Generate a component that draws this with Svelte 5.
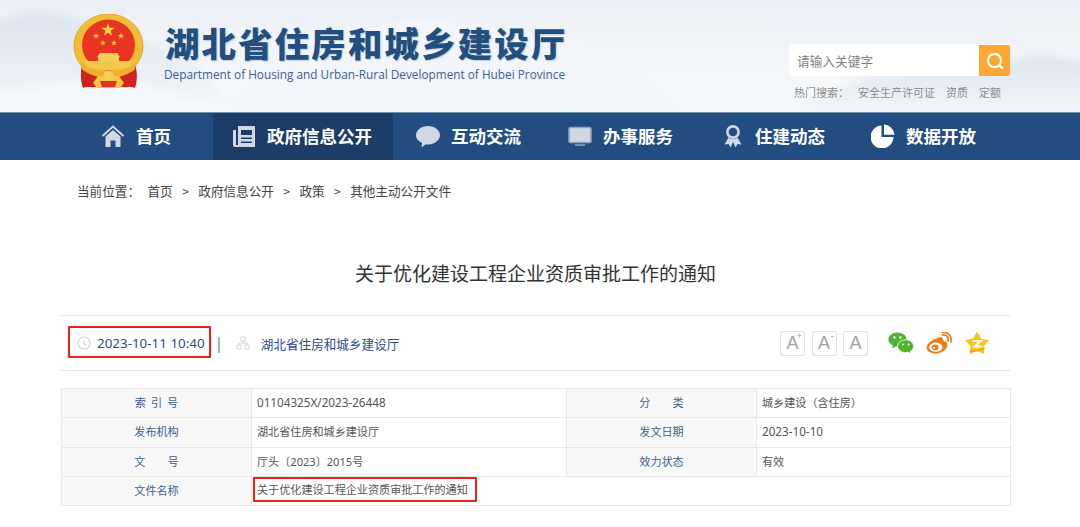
<script>
  const nav = [
    { key: 'home', label: '首页' },
    { key: 'gov', label: '政府信息公开', active: true },
    { key: 'talk', label: '互动交流' },
    { key: 'serve', label: '办事服务' },
    { key: 'news', label: '住建动态' },
    { key: 'data', label: '数据开放' }
  ];
  const crumbs = ['首页', '政府信息公开', '政策', '其他主动公开文件'];
  const rows = [
    ['索 引 号', '01104325X/2023-26448', '分　　类', '城乡建设（含住房）'],
    ['发布机构', '湖北省住房和城乡建设厅', '发文日期', '2023-10-10'],
    ['文　　号', '厅头〔2023〕2015号', '效力状态', '有效']
  ];
  const isLatin = (s) => /^[\x00-\x7f]+$/.test(s);
  const star = (cx, cy, r, k = 0.4) => {
    const p = [];
    for (let i = 0; i < 10; i++) {
      const a = -Math.PI / 2 + (i * Math.PI) / 5;
      const q = i % 2 ? r * k : r;
      p.push((cx + q * Math.cos(a)).toFixed(2) + ',' + (cy + q * Math.sin(a)).toFixed(2));
    }
    return p.join(' ');
  };
</script>

<div class="page">
  <header class="top">
    <svg class="scenery" viewBox="0 0 1080 112" preserveAspectRatio="none" aria-hidden="true">
      <defs>
        <linearGradient id="sky" x1="0" y1="0" x2="0" y2="1">
          <stop offset="0" stop-color="#ebf0f6" />
          <stop offset="1" stop-color="#f8fafc" />
        </linearGradient>
        <linearGradient id="hill" x1="0" y1="0" x2="0" y2="1">
          <stop offset="0" stop-color="#dbe5ee" />
          <stop offset="1" stop-color="#f5f8fb" />
        </linearGradient>
        <filter id="soft"><feGaussianBlur stdDeviation="4" /></filter>
      </defs>
      <rect width="1080" height="112" fill="url(#sky)" />
      <g filter="url(#soft)">
        <path d="M-10 24 L30 12 L58 14 L120 32 L190 62 L250 120 L-10 120Z" fill="url(#hill)" />
        <path d="M200 120 L300 40 L420 20 L560 36 L640 70 L700 120Z" fill="#f2f6fa" />
        <path d="M760 120 L880 72 L990 68 L1040 54 L1090 64 L1090 120Z" fill="url(#hill)" />
        <path d="M-10 92 L120 78 L260 120 L-10 120Z" fill="#f6f9fb" />
      </g>
    </svg>
    <div class="emblem">
      <svg width="72" height="76" viewBox="0 0 72 76" aria-hidden="true">
        <path d="M9 50 C7 60 8 68 10 74 C14 72 18 74 22 73 L50 73 C54 74 58 72 62 74 C64 68 65 60 62 50Z" fill="#cf231d" />
        <ellipse cx="35.5" cy="32" rx="34.5" ry="32" fill="#f2bd36" stroke="#e6a82a" />
        <ellipse cx="35.5" cy="31" rx="26.5" ry="25.5" fill="#ea3423" />
        <polygon points={star(35, 16, 7)} fill="#f7d23f" />
        <polygon points={star(23, 22, 3.4)} fill="#f7d23f" />
        <polygon points={star(48, 22, 3.4)} fill="#f7d23f" />
        <polygon points={star(30, 29, 3)} fill="#f7d23f" />
        <polygon points={star(41, 29, 3)} fill="#f7d23f" />
        <path d="M27 39 H44 L47 43 H24Z M25 43 H46 V47 H25Z" fill="#f6cf58" />
        <path d="M12 47 H59 L57 53 C50 57 21 57 14 53Z" fill="#f4c84a" />
        <path d="M9 48 C16 60 55 60 62 48 L62 55 C52 66 19 66 9 55Z" fill="#eeb02c" />
        <path d="M25 62 H46 L51 69 L47 74 H24 L20 69Z" fill="#f3c645" />
        <circle cx="35.5" cy="62" r="5" fill="#f6cf58" />
        <path d="M27 67 H44 L42 73 H29Z" fill="#e0332a" />
      </svg>
    </div>
    <div class="brand">
      <h1>湖北省住房和城乡建设厅</h1>
      <p>Department of Housing and Urban-Rural Development of Hubei Province</p>
    </div>
    <div class="find">
      <div class="searchbox">
        <span class="ph">请输入关键字</span>
        <span class="go">
          <svg width="20" height="20" viewBox="0 0 20 20" fill="none" stroke="#fff" stroke-width="2.2" stroke-linecap="round" aria-hidden="true">
            <circle cx="9.5" cy="9.5" r="6.6" /><path d="M14.6 14.6 L17.4 17.2" />
          </svg>
        </span>
      </div>
      <div class="hot">
        <span>热门搜索：</span><span class="h1">安全生产许可证</span><span>资质</span><span>定额</span>
      </div>
    </div>
  </header>

  <nav class="mainnav">
    {#each nav as n}
      <div class="item {n.key}" class:active={n.active}>
        <svg class="ico" width="24" height="24" viewBox="0 0 24 24" aria-hidden="true">
          {#if n.key === 'home'}
            <path d="M1.5 12 L12 2.5 L22.5 12" fill="none" stroke="#cfd8e3" stroke-width="1.8" />
            <path d="M4.5 12.5 L12 6 L19.5 12.5 V23 H14.5 V16.5 H9.5 V23 H4.5Z" fill="#cfd8e3" />
          {:else if n.key === 'gov'}
            <path d="M6 2 H23 V23 H3 C1.5 23 1 22 1 21 V6 H4 V21 H6Z" fill="#cfd8e3" />
            <path d="M9 6 H20 V11 H9Z M9 13.5 H20 V15 H9Z M9 17.5 H20 V19 H9Z" fill="#1c3d68" />
          {:else if n.key === 'talk'}
            <path d="M12 2 C18.6 2 24 6.2 24 11.2 C24 16.2 18.6 20.4 12 20.4 C11.2 20.4 10.5 20.3 9.8 20.2 L5.6 23.4 L6 18.8 C2.4 17.2 0 14.4 0 11.2 C0 6.2 5.4 2 12 2Z" fill="#cfd8e3" />
          {:else if n.key === 'serve'}
            <rect x="1" y="3.5" width="22" height="15" rx="1.5" fill="#cfd8e3" stroke="#8ea4bf" stroke-width="1.6" />
            <path d="M7 21 H17" stroke="#8ea4bf" stroke-width="1.6" />
          {:else if n.key === 'news'}
            <circle cx="12" cy="8" r="5.6" fill="none" stroke="#cfd8e3" stroke-width="2.6" />
            <path d="M7.5 13.5 L3.5 20.5 L7.5 20 L9.5 23.5 L12 18 L14.5 23.5 L16.5 20 L20.5 20.5 L16.5 13.5 C14 15.8 10 15.8 7.5 13.5Z" fill="#cfd8e3" />
          {:else}
            <path d="M10.5 1.5 V13 H22.5 A11.5 11.5 0 1 1 10.5 1.5Z" fill="#fff" />
            <path d="M13 0.5 A11 11 0 0 1 23.5 10.8 H13Z" fill="#fff" />
          {/if}
        </svg>
        <span class="lbl">{n.label}</span>
      </div>
    {/each}
  </nav>

  <div class="crumbs">
    <span class="here">当前位置：</span>
    {#each crumbs as c, i}
      {#if i}<span class="gt">&gt;</span>{/if}<span>{c}</span>
    {/each}
  </div>

  <main class="article">
    <h2>关于优化建设工程企业资质审批工作的通知</h2>

    <div class="meta">
      <div class="stamp">
        <svg width="14" height="14" viewBox="0 0 14 14" fill="none" stroke="#d4d4d4" stroke-width="1.2" aria-hidden="true">
          <circle cx="7" cy="7" r="6" /><path d="M7 3.2 V7.4 L9.6 9" />
        </svg>
        <span>2023-10-11 10:40</span>
      </div>
      <span class="bar">|</span>
      <svg class="org" width="14" height="14" viewBox="0 0 14 14" fill="none" stroke="#d6d6d6" aria-hidden="true">
        <rect x="5" y="1" width="4" height="4" /><rect x="1" y="9" width="4" height="4" /><rect x="9" y="9" width="4" height="4" />
        <path d="M7 5 V7 M3 9 V7 H11 V9" />
      </svg>
      <span class="source">湖北省住房和城乡建设厅</span>

      <div class="tools">
        <span class="sz">A<sup>+</sup></span>
        <span class="sz">A<sup>-</sup></span>
        <span class="sz">A</span>
        <svg class="wx" width="26" height="22" viewBox="0 0 26 22" aria-hidden="true">
          <path d="M9.5 0.5 C14.6 0.5 18.6 3.6 18.6 7.6 C18.6 11.6 14.6 14.8 9.5 14.8 L7.6 14.6 L4.2 16.6 L4.8 13.4 C2.2 12 0.4 10 0.4 7.6 C0.4 3.6 4.4 0.5 9.5 0.5Z" fill="#4eb52f" />
          <path d="M17.6 7.8 C22 7.8 25.6 10.6 25.6 14.2 C25.6 16.4 24.2 18.2 22.2 19.4 L22.8 21.8 L20 20.2 L17.6 20.6 C13.2 20.6 9.6 17.8 9.6 14.2 C9.6 10.6 13.2 7.8 17.6 7.8Z" fill="#4eb52f" stroke="#fff" stroke-width="0.8" />
          <circle cx="6.4" cy="5.4" r="1.2" fill="#fff" /><circle cx="12.4" cy="5.4" r="1.2" fill="#fff" />
          <circle cx="15" cy="12.4" r="1" fill="#fff" /><circle cx="20.6" cy="12.4" r="1" fill="#fff" />
        </svg>
        <svg class="wb" width="26" height="22" viewBox="0 0 26 22" aria-hidden="true">
          <path d="M10.4 6.4 C14 4.4 16.4 5 17 6.8 C17.4 8 16.6 8.8 18.4 9.2 C20.4 9.8 21.4 11 21.4 13 C21.4 17.2 15.8 21.4 9.8 21.4 C4.6 21.4 0.6 18.8 0.6 15.4 C0.6 12.4 4.8 8 10.4 6.4Z" fill="#f47a12" />
          <ellipse cx="9.8" cy="15.2" rx="6.6" ry="4.6" fill="#fff" />
          <ellipse cx="9.2" cy="15.4" rx="3.4" ry="2.8" fill="#f47a12" />
          <circle cx="8.2" cy="15.8" r="1" fill="#fff" />
          <path d="M16.6 3 C20.4 2.2 23.2 5.4 22 9" fill="none" stroke="#f47a12" stroke-width="1.8" stroke-linecap="round" />
          <path d="M16.4 0.6 C22 -0.4 26.6 4.6 24.8 10" fill="none" stroke="#f47a12" stroke-width="1.6" stroke-linecap="round" />
        </svg>
        <svg class="qz" width="24" height="22" viewBox="0 0 24 22" aria-hidden="true">
          <polygon points={star(12, 12, 12.5, 0.55)} fill="#fbc515" />
          <path d="M8 9 H16 L9.5 14.5 H16.4" fill="none" stroke="#fff" stroke-width="2" />
          <path d="M5 17.4 C10 18.6 15 17.6 19.6 15.4 L19.4 17.4 L12 19 L5 20.4Z" fill="#f19d1d" />
        </svg>
      </div>
    </div>

    <table class="facts">
      <tbody>
        {#each rows as r}
          <tr>
            <th>{r[0]}</th><td class:num={isLatin(r[1])}>{r[1]}</td><th>{r[2]}</th><td class:num={isLatin(r[3])}>{r[3]}</td>
          </tr>
        {/each}
        <tr>
          <th>文件名称</th>
          <td colspan="3" class="named"><span class="flag">关于优化建设工程企业资质审批工作的通知</span></td>
        </tr>
      </tbody>
    </table>
  </main>
</div>

<style>
  :global(body) {
    margin: 0;
    background: #fff;
    font-family: "Noto Sans CJK SC", "Noto Sans", sans-serif;
  }
  .page {
    width: 1080px;
    height: 527px;
    overflow: hidden;
  }
  .top {
    position: relative;
    height: 112px;
    display: flex;
    box-sizing: border-box;
  }
  .scenery {
    position: absolute;
    inset: 0;
    width: 100%;
    height: 100%;
  }
  .emblem {
    position: relative;
    margin: 14px 0 0 73px;
    width: 72px;
    height: 76px;
  }
  .emblem svg { display: block; }
  .brand {
    position: relative;
    margin-left: 20px;
    width: 440px;
  }
  h1 {
    margin: 22px 0 0;
    font-size: 34.4px;
    line-height: 40px;
    font-weight: 900;
    letter-spacing: 2.2px;
    color: #234f80;
    white-space: nowrap;
    text-shadow: 1px 1px 1px rgba(35, 79, 128, 0.25);
  }
  .brand p {
    margin: 3px 0 0 -1px;
    font-family: "Open Sans", sans-serif;
    font-size: 11.8px;
    line-height: 18px;
    color: #3d5f8c;
    white-space: nowrap;
  }
  .find {
    position: relative;
    margin: 44px 0 0 184px;
    width: 221px;
  }
  .searchbox {
    height: 32px;
    background: #fff;
    border-radius: 2px;
    display: flex;
    align-items: center;
    justify-content: space-between;
  }
  .ph {
    margin-left: 8px;
    font-size: 12.7px;
    color: #808080;
  }
  .go {
    width: 31px;
    height: 31px;
    margin-top: 1px;
    background: #ffa733;
    border-radius: 0 2px 2px 0;
    display: flex;
    align-items: center;
    justify-content: center;
  }
  .hot {
    margin: 8px 0 0 5px;
    display: flex;
    font-size: 11px;
    line-height: 16px;
    color: #8c8c8c;
    white-space: nowrap;
  }
  .hot span { margin-right: 11px; }
  .hot span:first-child { margin-right: 9px; }

  .mainnav {
    height: 48px;
    box-sizing: border-box;
    border-top: 1px solid #7491b3;
    background: #234d80;
    display: grid;
    grid-template-columns: 213px 180px 152px 155px 148px 232px;
  }
  .item {
    display: flex;
    align-items: center;
    color: #fff;
    font-size: 17.5px;
    font-weight: 700;
    white-space: nowrap;
    padding-left: 23px;
    padding-bottom: 2px;
  }
  .item .lbl { margin-left: 11px; }
  .item.home { padding-left: 101px; }
  .item.gov { padding-left: 19px; }
  .item.news { padding-left: 21px; }
  .item.news .lbl { margin-left: 10px; }
  .active { background: #1c3d68; }
  .ico { flex: none; }

  .crumbs {
    margin: 22px 0 0 77px;
    display: flex;
    align-items: center;
    font-size: 12.6px;
    line-height: 18px;
    color: #444;
    white-space: nowrap;
  }
  .here { margin-right: 2.5px; width: 68px; }
  .gt { margin: 0 9.3px; width: 7px; font-size: 12px; text-align: center; }

  .article { margin: 0 70px 0 61px; }
  h2 {
    margin: 60px 0 0;
    font-size: 19px;
    line-height: 26px;
    font-weight: 400;
    color: #333;
    text-align: center;
  }
  .meta {
    margin-top: 29px;
    height: 56px;
    box-sizing: border-box;
    border-top: 1px solid #e4e4e4;
    border-bottom: 1px solid #e4e4e4;
    display: flex;
    align-items: center;
    padding-left: 7px;
    color: #2c4a86;
  }
  .stamp {
    width: 143px;
    height: 32px;
    margin-top: -2px;
    box-sizing: border-box;
    border: 2px solid #f01f17;
    border-radius: 1px;
    display: flex;
    align-items: center;
    padding: 1px 0 0 7px;
    gap: 6px;
    font-size: 13.4px;
    white-space: nowrap;
    font-family: "Noto Sans", sans-serif;
  }
  .bar { margin-left: 6px; font-size: 14px; color: #2c5b9a; }
  .org { margin-left: 15px; }
  .source { margin-left: 11px; font-size: 12.6px; }
  .tools {
    margin-left: auto;
    margin-right: 21px;
    display: flex;
    align-items: center;
  }
  .sz {
    box-sizing: border-box;
    width: 25px;
    height: 25px;
    margin-right: 6.5px;
    border: 1px solid #e3e3e3;
    border-radius: 2px;
    color: #a3a3a3;
    font-family: "Liberation Sans", sans-serif;
    font-size: 18px;
    line-height: 23px;
    text-align: center;
    position: relative;
  }
  .sz sup {
    position: absolute;
    top: -2px;
    right: 2px;
    font-size: 9px;
    line-height: 12px;
  }
  .wx { margin-left: 13.5px; }
  .wb { margin-left: 12px; }
  .qz { margin-left: 13px; }

  .facts {
    margin-top: 17px;
    width: 950px;
    table-layout: fixed;
    border-collapse: collapse;
    font-size: 11.1px;
    color: #555;
  }
  .facts th, .facts td {
    border: 1px solid #e8e8e8;
    height: 29.25px;
    padding: 0 0 2px;
    box-sizing: border-box;
  }
  .facts tr:nth-child(n) th:nth-child(1) { width: 190px; }
  .facts th {
    background: #f8f8f8;
    font-weight: 400;
    color: #3a6290;
    text-align: center;
    white-space: pre;
    word-spacing: 2.5px;
  }
  .facts td {
    padding-left: 5px;
    white-space: nowrap;
    font-family: "Noto Sans", "Noto Sans CJK SC", sans-serif;
  }
  .facts td.num { font-size: 11.7px; }
  .facts tr:first-child td:nth-child(2) { width: 315px; }
  .facts tr:first-child th:nth-child(3) { width: 190px; }
  .flag {
    display: inline-block;
    box-sizing: border-box;
    margin-left: -4px;
    padding: 0 7px 0 2px;
    height: 25px;
    line-height: 21px;
    border: 2px solid #f01f17;
    border-radius: 1px;
    vertical-align: middle;
  }
</style>
